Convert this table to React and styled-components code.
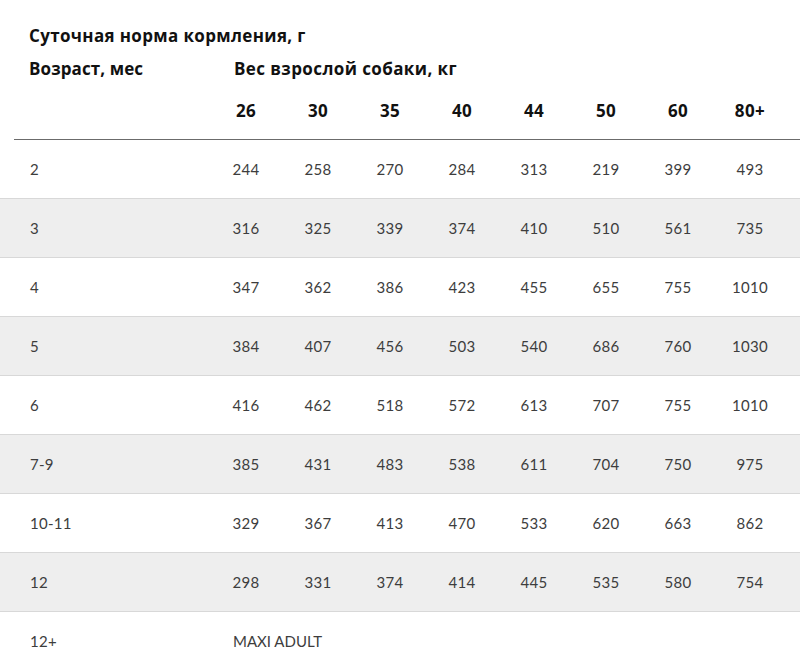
import React from 'react';
import styled, { createGlobalStyle } from 'styled-components';

const GlobalStyle = createGlobalStyle`
  body {
    margin: 0;
    background: #fff;
    font-family: Lato, "Noto Sans", sans-serif;
  }
`;

const weights = ['26', '30', '35', '40', '44', '50', '60', '80+'];

const rows = [
  { age: '2', values: [244, 258, 270, 284, 313, 219, 399, 493] },
  { age: '3', values: [316, 325, 339, 374, 410, 510, 561, 735] },
  { age: '4', values: [347, 362, 386, 423, 455, 655, 755, 1010] },
  { age: '5', values: [384, 407, 456, 503, 540, 686, 760, 1030] },
  { age: '6', values: [416, 462, 518, 572, 613, 707, 755, 1010] },
  { age: '7-9', values: [385, 431, 483, 538, 611, 704, 750, 975] },
  { age: '10-11', values: [329, 367, 413, 470, 533, 620, 663, 862] },
  { age: '12', values: [298, 331, 374, 414, 445, 535, 580, 754] },
];

const headingFont = `"Open Sans", Lato, sans-serif`;

const Container = styled.div`
  width: 800px;
  padding-top: 24px;
`;

const Title = styled.h2`
  margin: 0;
  padding-left: 29px;
  font-family: ${headingFont};
  font-size: 17px;
  line-height: 24px;
  font-weight: 700;
  letter-spacing: 0.35px;
  color: #111;
`;

const Grid = styled.div`
  display: grid;
  grid-template-columns: 210px repeat(8, 72px) 1fr;
  align-items: center;
`;

const SubHeader = styled(Grid)`
  margin-top: 9px;
  font-family: ${headingFont};
  font-size: 17px;
  line-height: 24px;
  font-weight: 700;
  letter-spacing: 0.4px;
  color: #111;
`;

const SubLabel = styled.div`
  padding-left: 29px;
  letter-spacing: 0.1px;
`;

const SubSpan = styled.div`
  grid-column: 2 / span 8;
  padding-left: 24px;
  white-space: nowrap;
`;

const WeightRow = styled(Grid)`
  margin-left: 14px;
  grid-template-columns: 196px repeat(8, 72px) 1fr;
  padding: 18px 0 16px;
  border-bottom: 1px solid #6b6b6b;
  font-family: ${headingFont};
  font-size: 17px;
  line-height: 24px;
  font-weight: 700;
  letter-spacing: 0.4px;
  color: #111;
`;

const Row = styled(Grid)`
  height: 58px;
  background: ${({ $shaded }) => ($shaded ? '#eeeeee' : '#fff')};
  border-bottom: ${({ $last }) => ($last ? 'none' : '1px solid #d8d8d8')};
  font-size: 15px;
  letter-spacing: 0.3px;
  color: #3d3d3d;
`;

const Age = styled.div`
  padding-left: 30px;
`;

const Cell = styled.div`
  text-align: center;
`;

const Product = styled.div`
  grid-column: 2 / span 8;
  padding-left: 23px;
  text-transform: uppercase;
  letter-spacing: 0;
`;

const App = () => (
  <Container>
    <GlobalStyle />
    <Title>Суточная норма кормления, г</Title>
    <SubHeader>
      <SubLabel>Возраст, мес</SubLabel>
      <SubSpan>Вес взрослой собаки, кг</SubSpan>
    </SubHeader>
    <WeightRow>
      <div />
      {weights.map((w) => (
        <Cell key={w}>{w}</Cell>
      ))}
    </WeightRow>
    {rows.map((r, i) => (
      <Row key={r.age} $shaded={i % 2 === 1}>
        <Age>{r.age}</Age>
        {r.values.map((v, j) => (
          <Cell key={j}>{v}</Cell>
        ))}
      </Row>
    ))}
    <Row $last>
      <Age>12+</Age>
      <Product>Maxi Adult</Product>
    </Row>
  </Container>
);

export default App;
